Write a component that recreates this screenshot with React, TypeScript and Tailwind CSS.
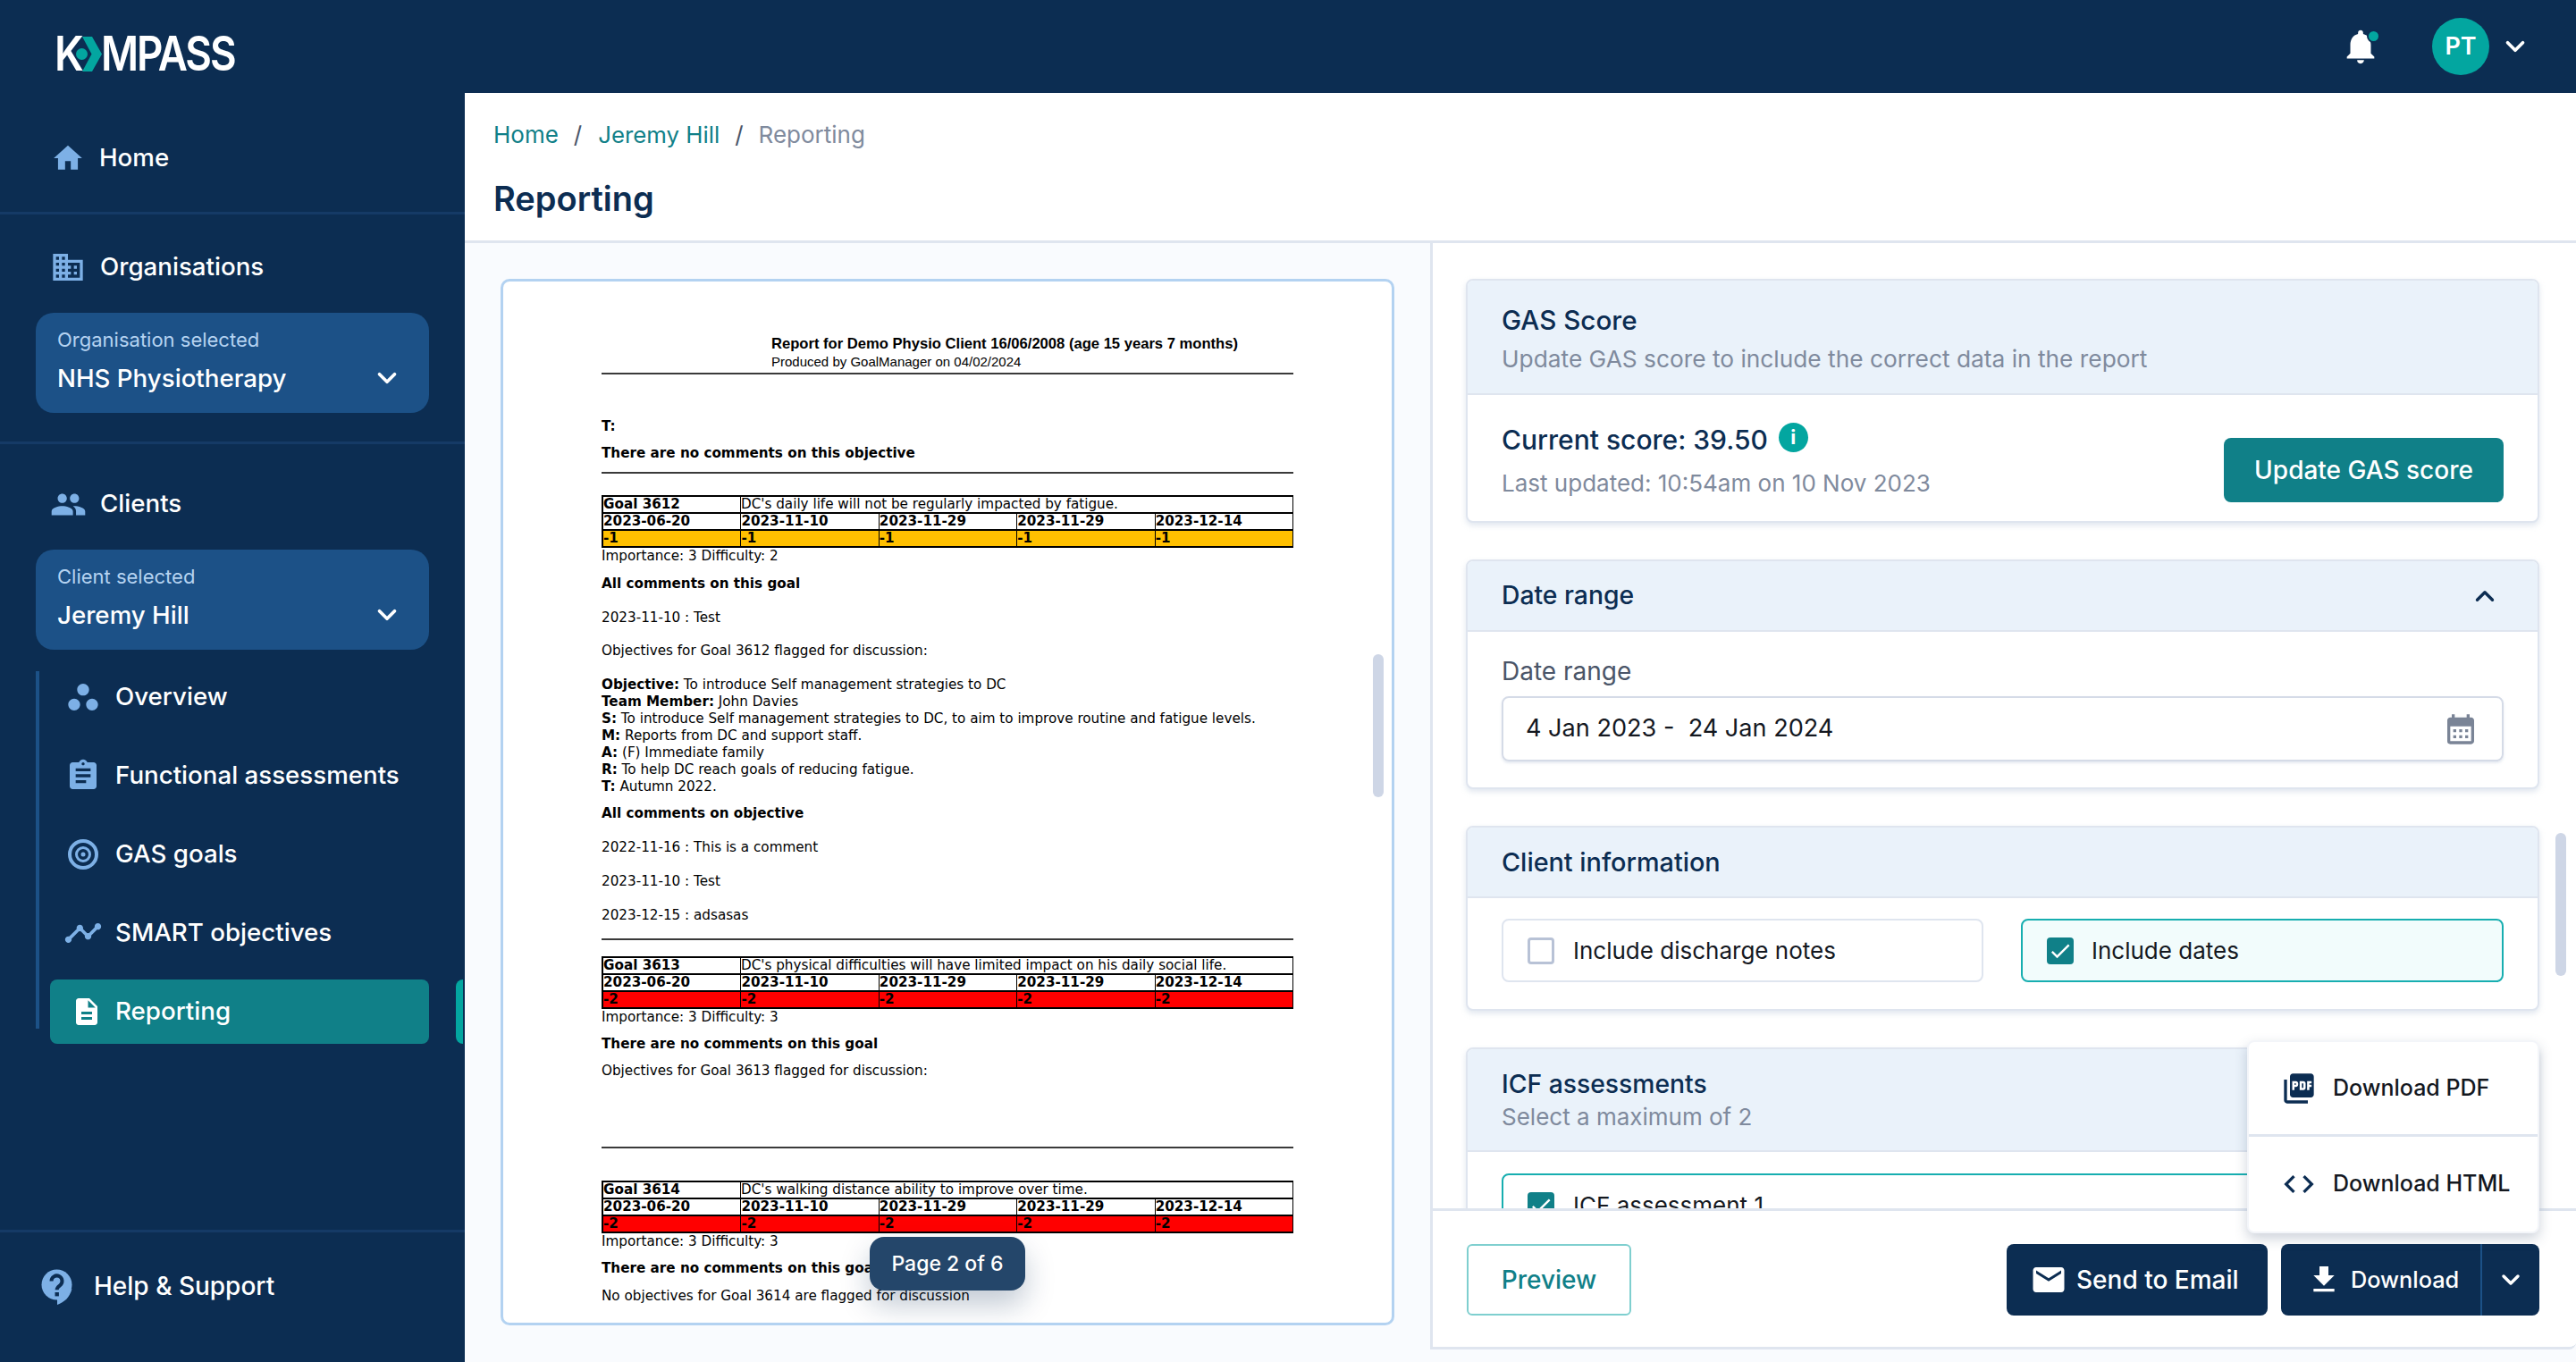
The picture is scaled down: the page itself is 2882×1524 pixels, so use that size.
import React from "react";
import { ChevronDown, ChevronUp } from "lucide-react";
import {
  MdHome, MdDomain, MdPeople, MdWorkspaces, MdAssignment, MdTimeline, MdDescription,
  MdNotifications, MdEmail, MdFileDownload, MdPictureAsPdf, MdCode, MdCalendarMonth, MdCheck,
} from "react-icons/md";

function Target() {
  return (
    <svg width="34" height="34" viewBox="0 0 34 34" fill="none" stroke="#7db0e6">
      <circle cx="17" cy="17" r="15" strokeWidth="4" />
      <circle cx="17" cy="17" r="7.5" strokeWidth="3" />
      <circle cx="17" cy="17" r="2.5" fill="#7db0e6" strokeWidth="0" />
    </svg>
  );
}

function Help() {
  return (
    <svg width="36" height="42" viewBox="0 0 36 42">
      <circle cx="17.5" cy="17.5" r="17" fill="#7db0e6" />
      <path d="M18 30 L18 40 C26 37 32 32 34.5 22 Z" fill="#7db0e6" />
      <path d="M11.5 13.5a6 6 0 1 1 9.5 4.8c-2 1.5-3.4 2.6-3.4 5" fill="none" stroke="#0c2d52" strokeWidth="4" />
      <rect x="15.5" y="26" width="4.4" height="4.4" fill="#0c2d52" />
    </svg>
  );
}

function NavRow({ icon, label, active }: { icon: React.ReactNode; label: string; active?: boolean }) {
  return (
    <div className={active ? "relative h-[72px] w-[424px] flex items-center rounded-[8px] bg-[#108088]" : "h-[72px] w-[424px] flex items-center"}>
      <div className="w-[73px] flex justify-center text-[#7db0e6] shrink-0">{icon}</div>
      <span className="text-[27.7px] text-white font-medium">{label}</span>
      {active && <div className="absolute left-[454px] top-0 h-[72px] w-[8px] rounded-l-[8px] bg-[#03a6a0]" />}
    </div>
  );
}

function Selector({ caption, value }: { caption: string; value: string }) {
  return (
    <div className="mx-[40px] mt-[16px] h-[112px] w-[440px] rounded-[20px] bg-[#1c5187] pl-[24px] pr-[30px] pt-[15px]">
      <div className="text-[22px] leading-[30px] text-[#b5d3f1]">{caption}</div>
      <div className="mt-[10px] flex items-center justify-between">
        <span className="text-[27.7px] leading-[36px] font-medium text-white">{value}</span>
        <ChevronDown size={34} color="#ffffff" strokeWidth={2.6} />
      </div>
    </div>
  );
}

function Sidebar() {
  return (
    <aside className="w-[520px] h-[1524px] shrink-0 flex flex-col bg-[#0c2d52]">
      <div className="h-[136px] pl-[61px] pt-[41px]">
        <div className="flex items-center h-[39px] text-white">
          <span className="text-[53px] leading-[39px] font-semibold scale-x-[0.88] origin-left w-[28px]">K</span>
          <svg width="36" height="39" viewBox="0 0 36 39" className="-ml-[5px] shrink-0">
            <path d="M8 0 L19 0 L30 19.5 L19 39 L8 39 L18.5 19.5 Z" fill="#03a6a0" />
            <circle cx="7.5" cy="19.5" r="6.5" fill="#03a6a0" />
          </svg>
          <span className="-ml-[7px] text-[53px] leading-[39px] font-semibold tracking-[-0.045em] scale-x-[0.86] origin-left">MPASS</span>
        </div>
      </div>
      <div className="h-[82px] flex items-center pl-[57px]">
        <MdHome size={38} color="#7db0e6" />
        <span className="ml-[16px] text-[27.7px] text-white font-medium">Home</span>
      </div>
      <div className="mt-[19px] border-b-[3px] border-[#153a66]" />
      <div className="mt-[24px] h-[70px] flex items-center pl-[56px]">
        <MdDomain size={40} color="#7db0e6" />
        <span className="ml-[16px] text-[27.7px] text-white font-medium">Organisations</span>
      </div>
      <Selector caption="Organisation selected" value="NHS Physiotherapy" />
      <div className="mt-[32px] border-b-[3px] border-[#153a66]" />
      <div className="mt-[32px] h-[70px] flex items-center pl-[56px]">
        <MdPeople size={41} color="#7db0e6" />
        <span className="ml-[15px] text-[27.7px] text-white font-medium">Clients</span>
      </div>
      <Selector caption="Client selected" value="Jeremy Hill" />
      <div className="ml-[40px] mt-[24px] h-[400px] border-l-[4px] border-[#1c5187] pl-[12px]">
        <div className="-mt-[7px] flex flex-col gap-[16px]">
          <NavRow icon={<MdWorkspaces size={40} />} label="Overview" />
          <NavRow icon={<MdAssignment size={40} />} label="Functional assessments" />
          <NavRow icon={<Target />} label="GAS goals" />
          <NavRow icon={<MdTimeline size={44} />} label="SMART objectives" />
          <NavRow icon={<span className="pl-[9px] flex text-white"><MdDescription size={36} /></span>} label="Reporting" active />
        </div>
      </div>
      <div className="flex-1" />
      <div className="h-[148px] border-t-[3px] border-[#153a66] flex items-start pl-[46px] pt-[41px]">
        <Help />
        <span className="ml-[23px] text-[28px] leading-[38px] text-white font-medium">Help &amp; Support</span>
      </div>
    </aside>
  );
}

function Rule({ className }: { className: string }) {
  return <div className={"h-[2px] w-[774px] bg-[#3a3a3a] " + className} />;
}

function GoalTable({ goal, text, score, color, className }: { goal: string; text: string; score: string; color: string; className: string }) {
  const dates = ["2023-06-20", "2023-11-10", "2023-11-29", "2023-11-29", "2023-12-14"];
  return (
    <div className={"w-[774px] border-t-[2px] border-l-[2px] border-black text-[15.2px] leading-[17px] text-black " + className}>
      <div className="flex h-[19px] border-b-[2px] border-black">
        <div className="w-[154px] font-bold border-r-[1px] border-black">{goal}</div>
        <div className="flex-1 border-r-[1px] border-black">{text}</div>
      </div>
      <div className="flex h-[19px] border-b-[2px] border-black font-bold">
        {dates.map((d, i) => (
          <div key={i} className="flex-1 border-r-[1px] border-black">{d}</div>
        ))}
      </div>
      <div className="flex h-[19px] border-b-[2px] border-black font-bold" style={{ backgroundColor: color }}>
        {dates.map((d, i) => (
          <div key={i} className="flex-1 border-r-[1px] border-black">{score}</div>
        ))}
      </div>
    </div>
  );
}

function Pdf() {
  return (
    <div className="relative ml-[40px] mt-[40px] h-[1171px] w-[1000px] overflow-hidden rounded-[10px] border-[3px] border-[#b3d2f1] bg-white pl-[110px] pt-[60px] font-['DejaVu_Sans',sans-serif] text-[15.2px] leading-[19px] text-black">
      <div className="pl-[190px] font-['Liberation_Sans',sans-serif]">
        <div className="text-[16.6px] font-bold">Report for Demo Physio Client 16/06/2008 (age 15 years 7 months)</div>
        <div className="mt-[1px] text-[15px]">Produced by GoalManager on 04/02/2024</div>
      </div>
      <Rule className="mt-[3px]" />
      <div className="mt-[49px] font-bold">T:</div>
      <div className="mt-[11px] font-bold">There are no comments on this objective</div>
      <Rule className="mt-[11px]" />
      <GoalTable className="mt-[24px]" goal="Goal 3612" text="DC's daily life will not be regularly impacted by fatigue." score="-1" color="#ffc000" />
      <div className="mt-[0px]">Importance: 3 Difficulty: 2</div>
      <div className="mt-[12px] font-bold">All comments on this goal</div>
      <div className="mt-[19px]">2023-11-10 : Test</div>
      <div className="mt-[18px]">Objectives for Goal 3612 flagged for discussion:</div>
      <div className="mt-[19px]"><b>Objective:</b> To introduce Self management strategies to DC</div>
      <div><b>Team Member:</b> John Davies</div>
      <div><b>S:</b> To introduce Self management strategies to DC, to aim to improve routine and fatigue levels.</div>
      <div><b>M:</b> Reports from DC and support staff.</div>
      <div><b>A:</b> (F) Immediate family</div>
      <div><b>R:</b> To help DC reach goals of reducing fatigue.</div>
      <div><b>T:</b> Autumn 2022.</div>
      <div className="mt-[11px] font-bold">All comments on objective</div>
      <div className="mt-[19px]">2022-11-16 : This is a comment</div>
      <div className="mt-[19px]">2023-11-10 : Test</div>
      <div className="mt-[19px]">2023-12-15 : adsasas</div>
      <Rule className="mt-[16px]" />
      <GoalTable className="mt-[18px]" goal="Goal 3613" text="DC's physical difficulties will have limited impact on his daily social life." score="-2" color="#ff0000" />
      <div className="mt-[0px]">Importance: 3 Difficulty: 3</div>
      <div className="mt-[11px] font-bold">There are no comments on this goal</div>
      <div className="mt-[11px]">Objectives for Goal 3613 flagged for discussion:</div>
      <Rule className="mt-[75px]" />
      <GoalTable className="mt-[36px]" goal="Goal 3614" text="DC's walking distance ability to improve over time." score="-2" color="#ff0000" />
      <div className="mt-[0px]">Importance: 3 Difficulty: 3</div>
      <div className="mt-[11px] font-bold">There are no comments on this goal</div>
      <div className="mt-[12px]">No objectives for Goal 3614 are flagged for discussion</div>
      <div className="absolute right-[9px] top-[417px] h-[160px] w-[12px] rounded-full bg-[#ced6e6]" />
      <div className="absolute left-1/2 bottom-[36px] -translate-x-1/2 flex h-[60px] w-[174px] items-center justify-center rounded-[16px] bg-[#24466a] font-['Inter',sans-serif] text-[23px] font-medium text-white shadow-[0_16px_32px_rgba(12,45,82,0.25)]">
        Page 2 of 6
      </div>
    </div>
  );
}

function Card({ children, className }: { children: React.ReactNode; className: string }) {
  return (
    <section className={"w-[1201px] shrink-0 overflow-hidden rounded-[8px] border-[2px] border-[#dfe5ef] bg-white shadow-[0_3px_6px_rgba(170,185,210,0.35)] " + className}>
      {children}
    </section>
  );
}

function CheckBox({ on }: { on: boolean }) {
  return on ? (
    <span className="flex h-[30px] w-[30px] shrink-0 items-center justify-center rounded-[4px] bg-[#108088] text-white">
      <MdCheck size={28} />
    </span>
  ) : (
    <span className="h-[30px] w-[30px] shrink-0 rounded-[4px] border-[3px] border-[#b8c2d6] bg-white" />
  );
}

function RightPanel() {
  return (
    <div className="relative h-[1238px] flex-1 overflow-hidden rounded-br-[8px] border-l-[3px] border-b-[3px] border-[#dfe5ef] bg-white">
      <div className="flex flex-col gap-[41px] pl-[37px] pt-[40px]">
        <Card className="h-[273px]">
          <div className="h-[128px] border-b-[2px] border-[#dfe5ef] bg-[#eaf2fa] pl-[38px] pt-[24px]">
            <div className="text-[29.6px] leading-[40px] font-medium text-[#0c2d52]">GAS Score</div>
            <div className="mt-[6px] text-[26.3px] leading-[36px] text-[#7f8a9d]">Update GAS score to include the correct data in the report</div>
          </div>
          <div className="flex items-center justify-between pl-[38px] pr-[38px]">
            <div className="pt-[24px]">
              <div className="flex items-center gap-[12px]">
                <span className="text-[30px] leading-[44px] font-medium text-[#0c2d52]">Current score: 39.50</span>
                <span className="flex h-[33px] w-[33px] -mt-[4px] items-center justify-center rounded-full bg-[#03a6a0] text-[22px] font-bold text-white">i</span>
              </div>
              <div className="mt-[9px] text-[26px] leading-[36px] text-[#7f8a9d]">Last updated: 10:54am on 10 Nov 2023</div>
            </div>
            <button className="mt-[48px] h-[72px] w-[313px] rounded-[8px] bg-[#108088] text-[28px] font-medium text-white">Update GAS score</button>
          </div>
        </Card>
        <Card className="h-[257px]">
          <div className="flex h-[79px] items-center justify-between border-b-[2px] border-[#dfe5ef] bg-[#eaf2fa] pl-[38px] pr-[42px]">
            <span className="text-[28.3px] font-medium text-[#0c2d52]">Date range</span>
            <ChevronUp size={34} color="#0c2d52" strokeWidth={2.4} />
          </div>
          <div className="pl-[38px] pt-[25px]">
            <div className="text-[28px] leading-[38px] text-[#4a5568]">Date range</div>
            <div className="mt-[9px] flex h-[73px] w-[1121px] items-center justify-between rounded-[8px] border-[2px] border-[#d5dbe7] pl-[25px] pr-[26px] shadow-[0_2px_3px_rgba(170,185,210,0.3)]">
              <span className="whitespace-pre text-[27.1px] text-[#14181f]">4 Jan 2023 -  24 Jan 2024</span>
              <MdCalendarMonth size={40} color="#7a8496" />
            </div>
          </div>
        </Card>
        <Card className="h-[207px]">
          <div className="flex h-[79px] items-center border-b-[2px] border-[#dfe5ef] bg-[#eaf2fa] pl-[38px]">
            <span className="text-[28.8px] font-medium text-[#0c2d52]">Client information</span>
          </div>
          <div className="flex gap-[42px] pl-[38px] pt-[23px]">
            <div className="flex h-[71px] w-[539px] items-center gap-[21px] rounded-[8px] border-[2px] border-[#dfe5ef] pl-[27px]">
              <CheckBox on={false} />
              <span className="text-[26px] text-[#14181f]">Include discharge notes</span>
            </div>
            <div className="flex h-[71px] w-[540px] items-center gap-[20px] rounded-[8px] border-[2px] border-[#17aeb0] bg-[#f2fcfc] pl-[27px]">
              <CheckBox on />
              <span className="text-[26px] text-[#14181f]">Include dates</span>
            </div>
          </div>
        </Card>
        <Card className="h-[300px]">
          <div className="h-[115px] border-b-[2px] border-[#dfe5ef] bg-[#eaf2fa] pl-[38px] pt-[19px]">
            <div className="text-[28.3px] leading-[40px] font-medium text-[#0c2d52]">ICF assessments</div>
            <div className="text-[26px] leading-[34px] text-[#7f8a9d]">Select a maximum of 2</div>
          </div>
          <div className="pl-[38px] pt-[24px]">
            <div className="flex h-[71px] w-[1121px] items-center gap-[21px] rounded-[8px] border-[2px] border-[#17aeb0] pl-[27px]">
              <CheckBox on />
              <span className="text-[26px] text-[#14181f]">ICF assessment 1</span>
            </div>
          </div>
        </Card>
      </div>
      <div className="absolute right-[11px] top-[660px] h-[160px] w-[12px] rounded-full bg-[#ced6e6]" />
      <div className="absolute bottom-0 left-0 right-0 flex h-[155px] items-start justify-between border-t-[3px] border-[#dfe5ef] bg-white pl-[38px] pr-[41px] pt-[37px]">
        <button className="h-[80px] w-[184px] rounded-[6px] border-[2px] border-[#7fcfcf] text-[28px] font-medium text-[#108088]">Preview</button>
        <div className="flex gap-[15px]">
          <button className="flex h-[80px] w-[292px] items-center rounded-[8px] bg-[#0c2d52] pl-[26px] text-[28px] font-medium text-white">
            <MdEmail size={42} />
            <span className="ml-[10px]">Send to Email</span>
          </button>
          <div className="flex h-[80px] w-[289px] items-center rounded-[8px] bg-[#0c2d52] font-medium text-white">
            <div className="flex h-full w-[225px] items-center border-r-[2px] border-[#1c5187] pl-[28px]">
              <MdFileDownload size={40} />
              <span className="ml-[10px] text-[25.3px]">Download</span>
            </div>
            <div className="flex flex-1 justify-center"><ChevronDown size={32} strokeWidth={2.6} /></div>
          </div>
        </div>
      </div>
      <div className="absolute right-[41px] top-[892px] h-[216px] w-[327px] rounded-[8px] border-[2px] border-[#f3f5f9] bg-white shadow-[0_6px_14px_rgba(60,80,110,0.25)]">
        <div className="flex h-[106px] items-center border-b-[3px] border-[#dfe5ef] pl-[36px] text-[#14181f]">
          <MdPictureAsPdf size={40} color="#0c2d52" />
          <span className="ml-[18px] text-[25px] font-medium">Download PDF</span>
        </div>
        <div className="flex h-[106px] items-center pl-[36px] text-[#14181f]">
          <MdCode size={40} color="#0c2d52" />
          <span className="ml-[18px] text-[25px] font-medium">Download HTML</span>
        </div>
      </div>
    </div>
  );
}

export default function App() {
  return (
    <div className="flex h-[1524px] w-[2882px] overflow-hidden bg-white font-['Inter',sans-serif]">
      <Sidebar />
      <main className="flex h-[1524px] flex-1 flex-col">
        <header className="flex h-[104px] shrink-0 items-center justify-end bg-[#0c2d52] pr-[51px]">
          <div className="relative mr-[57px] flex text-white">
            <MdNotifications size={46} />
            <span className="absolute right-[1px] top-[4px] h-[15px] w-[15px] rounded-full border-[2px] border-[#0c2d52] bg-[#03a6a0]" />
          </div>
          <div className="flex h-[64px] w-[64px] items-center justify-center rounded-full bg-[#03a6a0] text-[27px] font-semibold text-white">PT</div>
          <ChevronDown className="ml-[12px]" size={34} color="#ffffff" strokeWidth={2.6} />
        </header>
        <div className="h-[168px] shrink-0 border-b-[3px] border-[#dfe5ef] bg-white pl-[32px] pt-[30px]">
          <div className="flex h-[34px] items-center text-[26px] leading-[34px]">
            <span className="text-[#108088]">Home</span>
            <span className="ml-[17px] text-[#4a5568]">/</span>
            <span className="ml-[18px] text-[#108088] text-[25.8px]">Jeremy Hill</span>
            <span className="ml-[17px] text-[#4a5568]">/</span>
            <span className="ml-[17px] text-[#7f8a9d]">Reporting</span>
          </div>
          <h1 className="mt-[29px] text-[38px] leading-[50px] font-semibold text-[#0c2d52]">Reporting</h1>
        </div>
        <div className="flex flex-1 items-start bg-[#f9fbfe]">
          <div className="w-[1080px] shrink-0"><Pdf /></div>
          <RightPanel />
        </div>
      </main>
    </div>
  );
}
